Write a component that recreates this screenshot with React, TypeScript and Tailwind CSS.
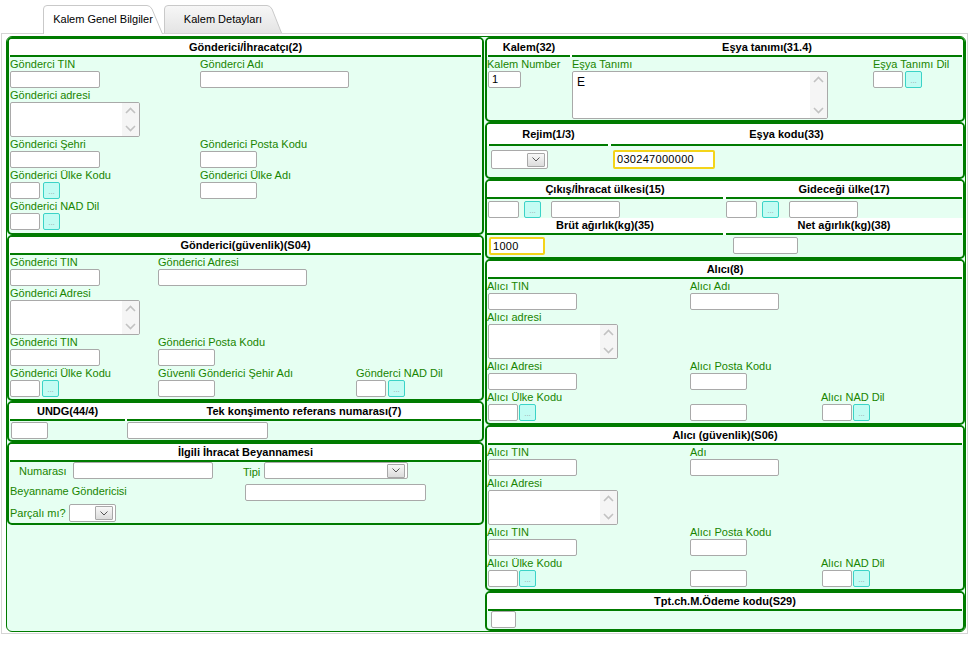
import type { ReactNode } from 'react'

const HEAD = 'h-[18px] border-b-2 border-[#007b00] text-center font-bold text-[11px] leading-[16px] text-black whitespace-nowrap'

function Label({ children, className = '' }: { children?: ReactNode; className?: string }) {
  return (
    <div className={`h-[14px] text-[11px] leading-[14px] text-[#198500] whitespace-nowrap ${className}`}>
      {children}
    </div>
  )
}

function Box({ className = '', value }: { className?: string; value?: string }) {
  return (
    <div
      className={`h-[17px] bg-white border border-[#a9a9a9] rounded-[2px] px-[3px] text-[11px] leading-[15px] text-black ${className}`}
    >
      {value}
    </div>
  )
}

function Yellow({ className = '', value }: { className?: string; value?: string }) {
  return (
    <div
      className={`bg-white border-2 border-[#f4d41a] rounded-[2px] px-[2px] text-[11px] text-black tracking-[0.3px] ${className}`}
    >
      {value}
    </div>
  )
}

function Dots({ className = '' }: { className?: string }) {
  return (
    <div
      className={`w-[17px] h-[17px] bg-[#c3fcf3] border border-[#3bd3c7] rounded-[2px] text-[8px] leading-[17px] text-[#9aa6a6] text-center ${className}`}
    >
      ...
    </div>
  )
}

function Chev({ up }: { up?: boolean }) {
  return (
    <svg width="11" height="7" viewBox="0 0 11 7">
      <path
        d={up ? 'M1 6 L5.5 1.5 L10 6' : 'M1 1 L5.5 5.5 L10 1'}
        fill="none"
        stroke="#c2c2c2"
        strokeWidth="1.6"
      />
    </svg>
  )
}

function Area({ className = '', value }: { className?: string; value?: string }) {
  return (
    <div className={`flex bg-white border border-[#a9a9a9] rounded-[2px] overflow-hidden ${className}`}>
      <div className="flex-1 px-[4px] pt-[3px] text-[12px] leading-[14px] text-black">{value}</div>
      <div className="w-[17px] bg-[#f5f5f5] flex flex-col justify-between items-center py-[4px]">
        <Chev up />
        <Chev />
      </div>
    </div>
  )
}

function Sel({ className = '' }: { className?: string }) {
  return (
    <div className={`flex items-center justify-end bg-white border border-[#a9a9a9] rounded-[2px] pr-[2px] ${className}`}>
      <div className="w-[18px] h-[14px] border border-[#a8a8a8] rounded-[1px] bg-linear-to-b from-[#f8f8f8] to-[#dcdcdc] flex items-center justify-center">
        <svg width="8" height="5" viewBox="0 0 8 5">
          <path d="M0.5 0.5 L4 4 L7.5 0.5" fill="none" stroke="#555" strokeWidth="1" />
        </svg>
      </div>
    </div>
  )
}

function Section({ children, className = '' }: { children: ReactNode; className?: string }) {
  return (
    <div className={`border-2 border-[#007b00] rounded-[5px] bg-[#e6fff2] overflow-hidden ${className}`}>
      {children}
    </div>
  )
}

function Tab({ label, active }: { label: string; active?: boolean }) {
  return (
    <div
      className={
        active
          ? 'relative z-10 w-[120px] h-[29px] flex items-center justify-center text-[11px] text-black'
          : 'relative ml-[1px] w-[118px] h-[28px] flex items-center justify-center text-[11px] text-black'
      }
    >
      <svg className="absolute inset-0" width={active ? 120 : 118} height={active ? 29 : 28}>
        <defs>
          <linearGradient id="tabg" x1="0" y1="0" x2="0" y2="1">
            <stop offset="0" stopColor="#f7f7f7" />
            <stop offset="1" stopColor="#e4e4e4" />
          </linearGradient>
        </defs>
        <path
          d={active ? 'M0.5 29 V4 Q0.5 0.5 4 0.5 H104 Q107 0.5 109 4 L119.5 29' : 'M0.5 28 V4 Q0.5 0.5 4 0.5 H103 Q106 0.5 108 4 L117.5 28'}
          fill={active ? '#ffffff' : 'url(#tabg)'}
          stroke="#c9c9c9"
        />
      </svg>
      <span className="relative">{label}</span>
    </div>
  )
}

export default function App() {
  return (
    <div className="w-[970px] h-[654px] bg-white overflow-hidden font-['Liberation_Sans',Arial,sans-serif]">
      <div className="flex items-start h-[33px] pt-[5px] pl-[43px]">
        <Tab label="Kalem Genel Bilgiler" active />
        <Tab label="Kalem Detayları" />
      </div>

      <div className="ml-[1px] w-[967px] h-[601px] border border-[#d5d5d5] pt-[2px] pl-[4px]">
        <div className="w-[960px] flex border border-[#007b00] rounded-[6px] bg-[#e6fff2]">
          {/* left column */}
          <div className="w-[477px]">
            <Section>
              <div className="bg-white px-[1px]">
                <div className={HEAD}>Gönderici/İhracatçı(2)</div>
              </div>
              <div className="pl-[1px] pb-[3px]">
                <div className="flex">
                  <div className="w-[190px]">
                    <Label>Gönderci TIN</Label>
                    <Box className="w-[90px]" />
                  </div>
                  <div>
                    <Label>Gönderci Adı</Label>
                    <Box className="w-[149px]" />
                  </div>
                </div>
                <Label>Gönderici adresi</Label>
                <Area className="w-[130px] h-[35px]" />
                <div className="flex">
                  <div className="w-[190px]">
                    <Label>Gönderici Şehri</Label>
                    <Box className="w-[90px]" />
                  </div>
                  <div>
                    <Label>Gönderici Posta Kodu</Label>
                    <Box className="w-[57px]" />
                  </div>
                </div>
                <div className="flex">
                  <div className="w-[190px]">
                    <Label>Gönderici Ülke Kodu</Label>
                    <div className="flex">
                      <Box className="w-[30px]" />
                      <Dots className="ml-[3px]" />
                    </div>
                  </div>
                  <div>
                    <Label>Gönderici Ülke Adı</Label>
                    <Box className="w-[57px]" />
                  </div>
                </div>
                <Label>Gönderici NAD Dil</Label>
                <div className="flex">
                  <Box className="w-[30px]" />
                  <Dots className="ml-[3px]" />
                </div>
              </div>
            </Section>

            <Section>
              <div className="bg-white px-[1px]">
                <div className={HEAD}>Gönderici(güvenlik)(S04)</div>
              </div>
              <div className="pl-[1px] pb-[2px]">
                <div className="flex">
                  <div className="w-[148px]">
                    <Label>Gönderici TIN</Label>
                    <Box className="w-[90px]" />
                  </div>
                  <div>
                    <Label>Gönderici Adresi</Label>
                    <Box className="w-[149px]" />
                  </div>
                </div>
                <Label>Gönderici Adresi</Label>
                <Area className="w-[130px] h-[35px]" />
                <div className="flex">
                  <div className="w-[148px]">
                    <Label>Gönderici TIN</Label>
                    <Box className="w-[90px]" />
                  </div>
                  <div>
                    <Label>Gönderici Posta Kodu</Label>
                    <Box className="w-[57px]" />
                  </div>
                </div>
                <div className="flex">
                  <div className="w-[148px]">
                    <Label>Gönderici Ülke Kodu</Label>
                    <div className="flex">
                      <Box className="w-[30px]" />
                      <Dots className="ml-[2px]" />
                    </div>
                  </div>
                  <div className="w-[198px]">
                    <Label>Güvenli Gönderici Şehir Adı</Label>
                    <Box className="w-[57px]" />
                  </div>
                  <div>
                    <Label>Gönderci NAD Dil</Label>
                    <div className="flex">
                      <Box className="w-[30px]" />
                      <Dots className="ml-[2px]" />
                    </div>
                  </div>
                </div>
              </div>
            </Section>

            <Section>
              <div className="flex bg-white px-[1px] gap-[2px]">
                <div className={`w-[115px] ${HEAD}`}>UNDG(44/4)</div>
                <div className={`flex-1 ${HEAD}`}>Tek konşimento referans numarası(7)</div>
              </div>
              <div className="flex pl-[2px] pt-[1px] pb-[1px]">
                <Box className="w-[37px]" />
                <Box className="w-[141px] ml-[79px]" />
              </div>
            </Section>

            <Section>
              <div className="bg-white px-[1px]">
                <div className={HEAD}>İlgili İhracat Beyannamesi</div>
              </div>
              <div className="pb-[1px]">
                <div className="flex h-[17px]">
                  <Label className="w-[64px] pl-[10px] self-center">Numarası</Label>
                  <Box className="w-[140px]" />
                  <Label className="ml-[30px] self-end">Tipi</Label>
                  <Sel className="ml-[4px] w-[144px] h-[17px]" />
                </div>
                <div className="flex mt-[5px]">
                  <Label className="w-[236px] pl-[1px]">Beyanname Göndericisi</Label>
                  <Box className="w-[181px]" />
                </div>
                <div className="flex items-center mt-[3px]">
                  <Label className="w-[60px] pl-[1px]">Parçalı mı?</Label>
                  <Sel className="w-[47px] h-[18px]" />
                </div>
              </div>
            </Section>
          </div>

          {/* right column */}
          <div className="ml-[1px] flex-1">
            <Section>
              <div className="flex bg-white px-[1px] gap-[2px]">
                <div className={`w-[82px] ${HEAD}`}>Kalem(32)</div>
                <div className={`flex-1 ${HEAD}`}>Eşya tanımı(31.4)</div>
              </div>
              <div className="flex pb-[1px]">
                <div className="w-[85px]">
                  <Label>Kalem Number</Label>
                  <Box className="w-[33px] ml-[1px]" value="1" />
                </div>
                <div className="w-[301px]">
                  <Label>Eşya Tanımı</Label>
                  <Area className="w-[256px] h-[48px]" value="E" />
                </div>
                <div>
                  <Label>Eşya Tanımı Dil</Label>
                  <div className="flex">
                    <Box className="w-[30px]" />
                    <Dots className="ml-[2px]" />
                  </div>
                </div>
              </div>
            </Section>

            <Section>
              <div className="flex bg-white pl-[2px] pr-[1px] gap-[3px]">
                <div className="w-[119px] h-[22px] border-b-2 border-[#007b00] text-center font-bold text-[11px] leading-[20px]">
                  Rejim(1/3)
                </div>
                <div className="flex-1 h-[22px] border-b-2 border-[#007b00] text-center font-bold text-[11px] leading-[20px]">
                  Eşya kodu(33)
                </div>
              </div>
              <div className="flex pt-[4px] pb-[8px]">
                <Sel className="ml-[4px] w-[57px] h-[19px]" />
                <Yellow className="ml-[65px] w-[102px] h-[19px] leading-[15px]" value="030247000000" />
              </div>
            </Section>

            <Section>
              <div className="flex bg-white pr-[1px] gap-[3px]">
                <div className={`w-[236px] ${HEAD}`}>Çıkış/İhracat ülkesi(15)</div>
                <div className={`flex-1 ${HEAD}`}>Gideceği ülke(17)</div>
              </div>
              <div className="flex pt-[2px]">
                <div className="w-[239px] flex">
                  <Box className="w-[31px] ml-[1px]" />
                  <Dots className="ml-[5px]" />
                  <Box className="w-[69px] ml-[10px]" />
                </div>
                <div className="flex">
                  <Box className="w-[31px]" />
                  <Dots className="ml-[5px]" />
                  <Box className="w-[69px] ml-[10px]" />
                </div>
              </div>
              <div className="flex bg-white pr-[1px] gap-[3px]">
                <div className="w-[236px] h-[17px] border-b-2 border-[#007b00] text-center font-bold text-[11px] leading-[15px]">
                  Brüt ağırlık(kg)(35)
                </div>
                <div className="flex-1 h-[17px] border-b-2 border-[#007b00] text-center font-bold text-[11px] leading-[15px]">
                  Net ağırlık(kg)(38)
                </div>
              </div>
              <div className="flex items-start pt-[2px] pb-[2px]">
                <div className="w-[239px]">
                  <Yellow className="ml-[2px] w-[56px] h-[18px] leading-[14px]" value="1000" />
                </div>
                <Box className="w-[65px] ml-[7px]" />
              </div>
            </Section>

            <Section>
              <div className="bg-white px-[1px]">
                <div className={HEAD}>Alıcı(8)</div>
              </div>
              <div className="pb-[2px]">
                <div className="flex">
                  <div className="w-[203px]">
                    <Label>Alıcı TIN</Label>
                    <Box className="w-[89px] ml-[1px]" />
                  </div>
                  <div>
                    <Label>Alıcı Adı</Label>
                    <Box className="w-[89px]" />
                  </div>
                </div>
                <Label>Alıcı adresi</Label>
                <Area className="w-[130px] h-[35px] ml-[1px]" />
                <div className="flex">
                  <div className="w-[203px]">
                    <Label>Alıcı Adresi</Label>
                    <Box className="w-[89px] ml-[1px]" />
                  </div>
                  <div>
                    <Label>Alıcı Posta Kodu</Label>
                    <Box className="w-[57px]" />
                  </div>
                </div>
                <div className="flex">
                  <div className="w-[203px]">
                    <Label>Alıcı Ülke Kodu</Label>
                    <div className="flex ml-[1px]">
                      <Box className="w-[30px]" />
                      <Dots className="ml-[1px]" />
                    </div>
                  </div>
                  <div className="w-[131px]">
                    <Label />
                    <Box className="w-[57px]" />
                  </div>
                  <div>
                    <Label>Alıcı NAD Dil</Label>
                    <div className="flex ml-[1px]">
                      <Box className="w-[30px]" />
                      <Dots className="ml-[1px]" />
                    </div>
                  </div>
                </div>
              </div>
            </Section>

            <Section>
              <div className="bg-white px-[1px]">
                <div className={HEAD}>Alıcı (güvenlik)(S06)</div>
              </div>
              <div className="pb-[2px]">
                <div className="flex">
                  <div className="w-[203px]">
                    <Label>Alıcı TIN</Label>
                    <Box className="w-[89px] ml-[1px]" />
                  </div>
                  <div>
                    <Label>Adı</Label>
                    <Box className="w-[89px]" />
                  </div>
                </div>
                <Label>Alıcı Adresi</Label>
                <Area className="w-[130px] h-[35px] ml-[1px]" />
                <div className="flex">
                  <div className="w-[203px]">
                    <Label>Alıcı TIN</Label>
                    <Box className="w-[89px] ml-[1px]" />
                  </div>
                  <div>
                    <Label>Alıcı Posta Kodu</Label>
                    <Box className="w-[57px]" />
                  </div>
                </div>
                <div className="flex">
                  <div className="w-[203px]">
                    <Label>Alıcı Ülke Kodu</Label>
                    <div className="flex ml-[1px]">
                      <Box className="w-[30px]" />
                      <Dots className="ml-[1px]" />
                    </div>
                  </div>
                  <div className="w-[131px]">
                    <Label />
                    <Box className="w-[57px]" />
                  </div>
                  <div>
                    <Label>Alıcı NAD Dil</Label>
                    <div className="flex ml-[1px]">
                      <Box className="w-[30px]" />
                      <Dots className="ml-[1px]" />
                    </div>
                  </div>
                </div>
              </div>
            </Section>

            <Section>
              <div className="bg-white px-[1px]">
                <div className={HEAD}>Tpt.ch.M.Ödeme kodu(S29)</div>
              </div>
              <div className="pb-[1px]">
                <Box className="w-[25px] ml-[4px]" />
              </div>
            </Section>
          </div>
        </div>
      </div>
    </div>
  )
}
